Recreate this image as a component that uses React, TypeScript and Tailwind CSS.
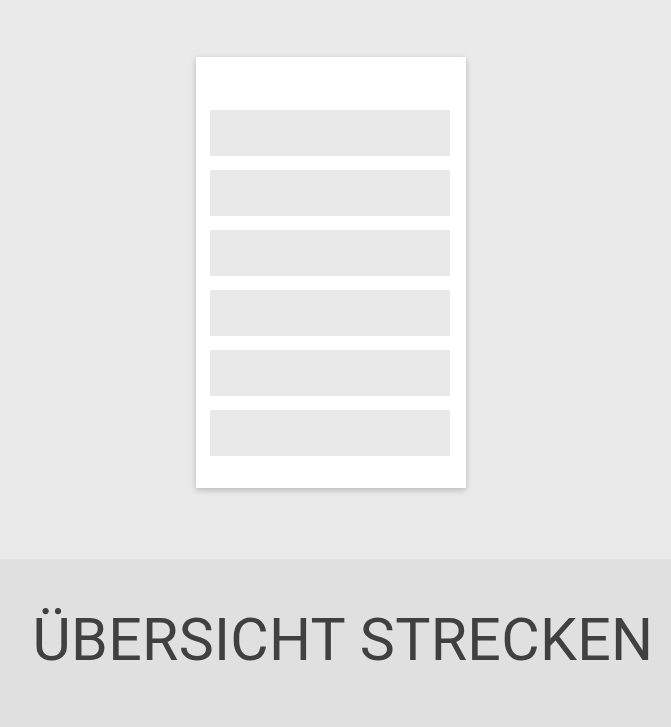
export default function App() {
  const rows = [0, 1, 2, 3, 4, 5];
  return (
    <div className="w-[671px] h-[727px] flex flex-col bg-[#eaeaea]" style={{ fontFamily: "Roboto, 'Noto Sans', sans-serif" }}>
      <div className="h-[559px] pt-[57px] pl-[196px]">
        <div className="w-[270px] h-[431px] bg-white shadow-[0_2px_6px_rgba(0,0,0,0.22)] pt-[53px] pl-[14px] pr-[16px] flex flex-col gap-[14px]">
          {rows.map((r) => (
            <div key={r} className="h-[46px] bg-[#e9e9e9]" />
          ))}
        </div>
      </div>
      <div className="flex-1 bg-[#e0e0e0] flex items-center justify-center">
        <span className="text-[59px] leading-none text-[#404040] tracking-[0.3px] -mt-[8px] pl-[15px]">ÜBERSICHT STRECKEN</span>
      </div>
    </div>
  );
}
